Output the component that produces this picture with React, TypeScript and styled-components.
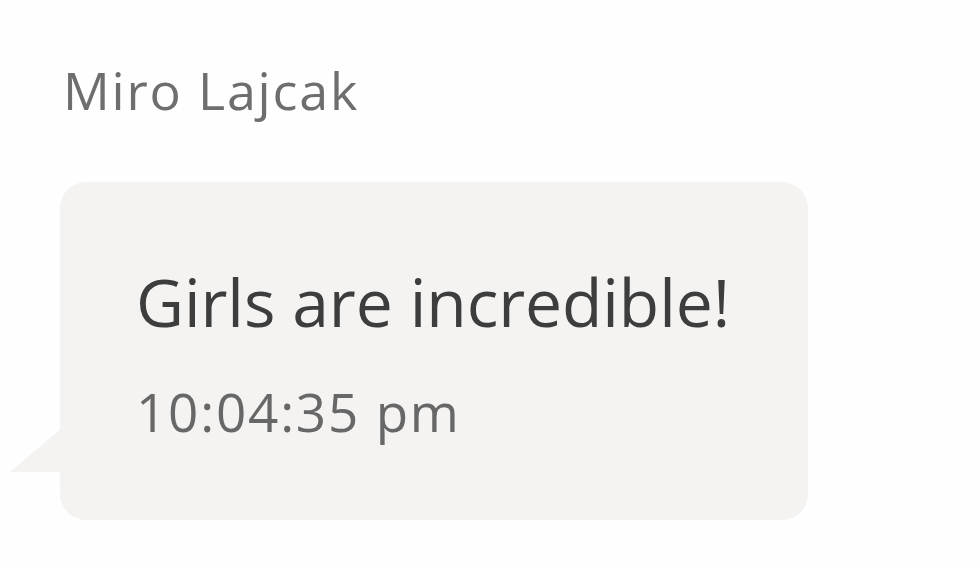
import React from "react";
import styled, { createGlobalStyle } from "styled-components";

const Global = createGlobalStyle`
  html, body { margin: 0; padding: 0; background: #ffffff; }
  body { font-family: "Open Sans", "Noto Sans", sans-serif; }
`;

const Page = styled.div`
  width: 980px;
  height: 568px;
  box-sizing: border-box;
  padding: 58px 0 0 60px;
  display: flex;
  flex-direction: column;
  align-items: flex-start;
  background: #fefefe;
`;

const Sender = styled.div`
  font-size: 52px;
  line-height: 64px;
  color: #6e6e6e;
  margin-left: 3px;
  letter-spacing: 1.8px;
`;

const Bubble = styled.div`
  position: relative;
  margin-top: 60px;
  width: 748px;
  height: 338px;
  box-sizing: border-box;
  padding: 79px 0 0 76px;
  background: #f4f3f1;
  border-radius: 26px;
  display: flex;
  flex-direction: column;

  &::before {
    content: "";
    position: absolute;
    left: -50px;
    top: 246px;
    width: 52px;
    height: 44px;
    background: #f4f3f1;
    clip-path: polygon(100% 0, 100% 100%, 0 100%);
  }
`;

const Message = styled.div`
  font-size: 66px;
  line-height: 80px;
  color: #3d3d3d;
  letter-spacing: -0.1px;
`;

const Time = styled.div`
  margin-top: 39px;
  font-size: 53px;
  line-height: 64px;
  color: #676767;
  letter-spacing: 1.8px;
`;

export default function App() {
  return (
    <>
      <Global />
      <Page>
        <Sender>Miro Lajcak</Sender>
        <Bubble>
          <Message>Girls are incredible!</Message>
          <Time>10:04:35 pm</Time>
        </Bubble>
      </Page>
    </>
  );
}
